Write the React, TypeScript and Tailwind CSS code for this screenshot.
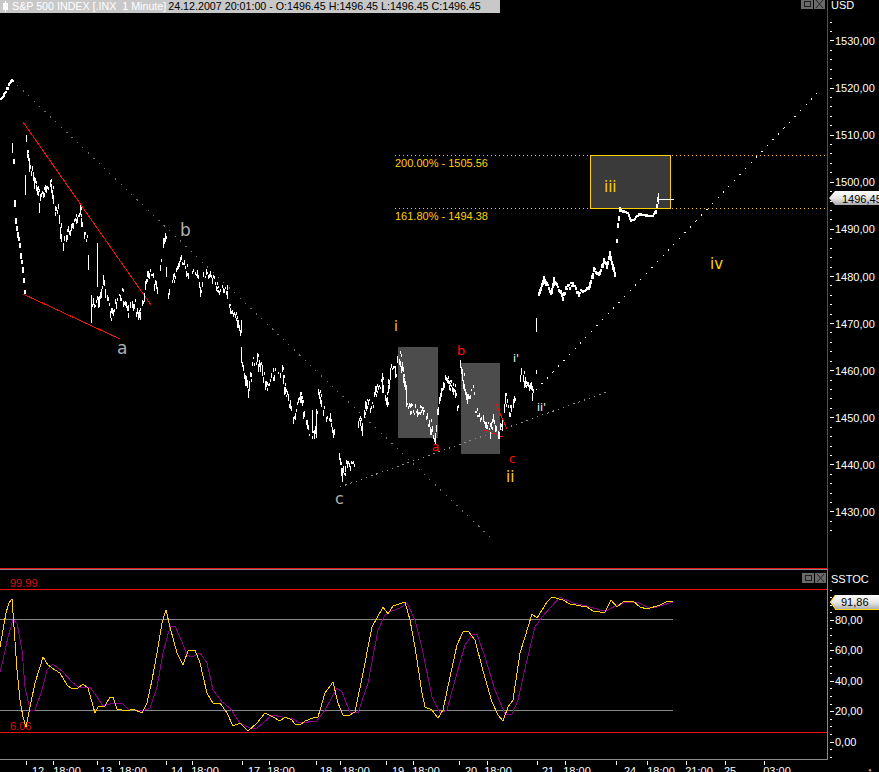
type Pt = [number, number];

// traced from the chart, in page pixels
const PRICE: { jitter: number; pts: Pt[] }[] = [
  { jitter: 1, pts: [[0, 98], [3, 94], [6, 88], [10, 80], [12, 79]] },
  { jitter: 2, pts: [[13, 160], [14, 200], [15, 218], [17, 232], [19, 242], [20, 253], [22, 268], [24, 290]] },
  {
    jitter: 5,
    pts: [[26, 135], [27, 150], [29, 163], [32, 170], [34, 178], [37, 185], [39, 200], [43, 190], [50, 180], [55, 207], [58, 208], [60, 227], [63, 240], [68, 230], [75, 218], [80, 210], [83, 230], [87, 240]],
  },
  {
    jitter: 5,
    pts: [[90, 297], [93, 303], [98, 300], [103, 277], [107, 293], [110, 313], [117, 297], [122, 293], [128, 310], [133, 300], [138, 313], [143, 297], [147, 270], [153, 277], [157, 287]],
  },
  { jitter: 4, pts: [[160, 262], [163, 240], [165, 233]] },
  {
    jitter: 4,
    pts: [[168, 290], [173, 277], [180, 257], [184, 263], [188, 273], [197, 273], [200, 290], [203, 273], [210, 273], [217, 287], [227, 287], [230, 307], [237, 317], [241, 333]],
  },
  {
    jitter: 5,
    pts: [[242, 363], [245, 377], [248, 388], [252, 363], [257, 357], [262, 370], [266, 383], [273, 373], [282, 367], [284, 387], [287, 393], [293, 413], [300, 397], [304, 412], [308, 430], [314, 432], [318, 390], [323, 410], [330, 417], [336, 437]],
  },
  { jitter: 5, pts: [[339, 450], [342, 473], [347, 463], [353, 460]] },
  {
    jitter: 5,
    pts: [[358, 417], [362, 427], [365, 403], [373, 403], [375, 390], [382, 380], [387, 397], [388, 383], [391, 367], [395, 370], [398, 350], [402, 367], [405, 383]],
  },
  {
    jitter: 5,
    pts: [[407, 407], [410, 407], [417, 410], [423, 410], [430, 423], [435, 437], [437, 413], [440, 390], [445, 377], [450, 383], [455, 390], [458, 407]],
  },
  {
    jitter: 5,
    pts: [[460, 365], [463, 377], [467, 397], [473, 388], [475, 410], [483, 417], [490, 427], [493, 413], [498, 430], [502, 420], [505, 397], [510, 410], [515, 393]],
  },
  { jitter: 5, pts: [[520, 370], [525, 380], [532, 390], [537, 370]] },
  {
    jitter: 2,
    pts: [[538, 293], [543, 275], [545, 282], [550, 290], [553, 278], [562, 295], [565, 287], [572, 283], [578, 292], [588, 287], [593, 269], [598, 273], [603, 260], [606, 263], [609, 252], [612, 263], [614, 270]],
  },
  { jitter: 1, pts: [[616, 238], [617, 223], [619, 208]] },
  { jitter: 0.6, pts: [[619, 208], [622, 210], [627, 212], [630, 219], [633, 219], [638, 213], [647, 215], [652, 215], [655, 210], [657, 197]] },
];

const SPIKES: [number, number, number][] = [
  [12, 143, 153], [25, 175, 195], [88, 255, 270], [91, 295, 323], [97, 243, 287], [166, 267, 277],
  [241, 320, 333], [241, 347, 363], [312, 410, 433], [316, 412, 438], [382, 373, 393], [406, 385, 407], [536, 318, 332], [658, 193, 204],
];

const YELLOW: Pt[] = [
  [0, 647], [3, 630], [6, 613], [9, 603], [12, 599], [14, 627], [17, 670], [20, 700], [23, 717], [26, 727], [30, 707], [35, 683], [40, 667], [43, 657], [48, 665], [55, 670], [60, 673], [67, 685], [72, 689], [78, 688], [83, 684], [88, 688], [95, 713], [98, 707], [105, 706], [110, 697], [113, 697], [117, 709], [127, 711], [133, 709], [142, 713], [147, 703], [152, 680], [157, 653], [162, 623], [166, 610], [170, 627], [177, 653], [183, 665], [188, 651], [195, 650], [200, 663], [207, 693], [213, 703], [220, 703], [227, 713], [233, 726], [240, 723], [248, 731], [257, 723], [265, 713], [273, 717], [280, 721], [285, 717], [292, 720], [295, 724], [300, 725],
  [305, 721], [313, 718], [318, 717], [325, 693], [333, 682], [338, 703], [343, 715], [348, 716], [355, 712], [363, 673], [372, 627], [377, 618], [383, 607], [388, 614], [393, 606], [405, 602], [410, 620], [415, 647], [422, 693], [425, 707], [432, 710], [438, 718], [443, 710], [450, 677], [457, 645], [463, 632], [468, 631], [475, 640], [482, 667], [492, 702], [498, 715], [503, 721], [508, 707], [513, 700], [520, 653], [525, 637], [532, 614], [537, 618], [547, 602], [552, 597], [563, 600], [570, 604], [587, 607], [593, 611], [600, 612],
  [605, 612], [611, 600], [617, 607], [623, 602], [633, 601], [640, 607], [647, 609], [660, 605], [668, 601], [673, 601],
];

const PURPLE: Pt[] = [
  [0, 672], [3, 660], [8, 637], [13, 620], [17, 623], [22, 650], [25, 687], [30, 710], [35, 710], [42, 690], [47, 670], [53, 664], [63, 672], [73, 683], [80, 688], [90, 687], [97, 697], [103, 706], [113, 703], [122, 703], [128, 709], [143, 711], [150, 708], [157, 687], [163, 653], [170, 627], [175, 626], [180, 637], [187, 655], [192, 657], [200, 653], [207, 663], [213, 690], [222, 702], [230, 708], [240, 723], [250, 728], [257, 728], [263, 723], [272, 715], [283, 717], [293, 719], [300, 723],
  [317, 721], [325, 710], [337, 688], [342, 692], [350, 712], [358, 713], [368, 683], [378, 630], [385, 615], [392, 611], [400, 608], [407, 603], [415, 620], [422, 648], [432, 697], [440, 713], [447, 710], [457, 673], [465, 645], [472, 635], [477, 634], [485, 657], [495, 690], [505, 714], [512, 714], [518, 700], [527, 660], [535, 627], [542, 617], [560, 597], [573, 603], [587, 606], [600, 610],
  [608, 610], [617, 605], [627, 602], [637, 602], [647, 607], [657, 607], [673, 602],
];

const TIME_LABELS: [number, string][] = [
  [38, '12'], [67, '18:00'], [106, '13'], [133, '18:00'], [177, '14'], [205, '18:00'], [254, '17'], [281, '18:00'],
  [326, '18'], [356, '18:00'], [398, '19'], [426, '18:00'], [471, '20'], [498, '18:00'], [548, '21'], [577, '18:00'],
  [630, '24'], [661, '18:00'], [699, '21:00'], [730, '25'], [777, '03:00'],
];
const TIME_TICKS = [26, 53, 97, 119, 166, 192, 242, 269, 316, 340, 386, 413, 459, 487, 537, 565, 616, 647, 686, 725, 764];

const PRICE_LABELS = [1530, 1520, 1510, 1500, 1490, 1480, 1470, 1460, 1450, 1440, 1430];
const STOCH_LABELS = ['80,00', '60,00', '40,00', '20,00', '0,00'];

const toPoints = (pts: Pt[]) => pts.map(([x, y]) => `${x},${y}`).join(' ');

// little LCG so the specks come out the same on every render
function makeSpecks() {
  let seed = 12345;
  const rand = () => {
    seed = (seed * 1103515245 + 12345) & 0x7fffffff;
    return seed / 0x7fffffff;
  };
  const specks: { x: number; y: number; w: number; h: number }[] = [];
  PRICE.forEach(({ jitter, pts }) => {
    for (let i = 0; i < pts.length - 1; i++) {
      const [x0, y0] = pts[i];
      const [x1, y1] = pts[i + 1];
      for (let x = x0; x <= x1; x++) {
        const t = x1 === x0 ? 0 : (x - x0) / (x1 - x0);
        const base = y0 + (y1 - y0) * t;
        const steep = Math.abs(y1 - y0) / Math.max(1, x1 - x0);
        if (jitter > 2 && rand() < 0.2) continue;
        specks.push({
          x,
          y: Math.round(base + (rand() - 0.5) * jitter * 2),
          w: jitter > 2 ? 1 : 2,
          h: Math.max(2, Math.round(rand() * jitter * 1.1 + Math.min(steep, 4))),
        });
        // stray second tick next to the first, makes the clusters look blocky
        if (jitter > 2 && rand() < 0.45) {
          specks.push({ x: x + 1, y: Math.round(base + (rand() - 0.5) * jitter * 2), w: 1, h: 3 });
        }
      }
    }
  });
  return specks;
}

function WindowButtons() {
  return (
    <div className="flex gap-[1px]">
      <svg width="12" height="10" viewBox="0 0 12 10" shapeRendering="crispEdges">
        <rect width="12" height="10" fill="#6a6a6a" />
        <rect x="3" y="2.5" width="6" height="5" fill="none" stroke="#1c1c1c" />
      </svg>
      <svg width="11" height="10" viewBox="0 0 11 10">
        <rect width="11" height="10" fill="#6a6a6a" />
        <path d="M2 1 L9 9 M9 1 L2 9" stroke="#222" strokeWidth="1" />
      </svg>
    </div>
  );
}

function PriceChart() {
  const specks = makeSpecks();
  return (
    <svg width="827" height="556" viewBox="0 13 827 556" className="block">
      <rect x="398" y="347" width="40" height="91" fill="#4c4c4c" />
      <rect x="461" y="363" width="39" height="91" fill="#4c4c4c" />
      <rect x="590.5" y="155.5" width="80" height="52.5" fill="#3a3a3a" stroke="#ffd200" shapeRendering="crispEdges" />

      <g fill="none" shapeRendering="crispEdges">
        <line x1="12" y1="80" x2="494" y2="541" stroke="#707070" strokeDasharray="1.5 6" />
        <line x1="340" y1="487" x2="607" y2="392" stroke="#909090" strokeDasharray="1.5 4" />
        <line x1="536" y1="390" x2="821" y2="89" stroke="#ffffff" strokeDasharray="1.5 6.5" />
        <g stroke="#ffd200" strokeDasharray="1 3">
          <line x1="395" y1="155.5" x2="590" y2="155.5" />
          <line x1="672" y1="155.5" x2="825" y2="155.5" />
          <line x1="395" y1="208.5" x2="590" y2="208.5" />
          <line x1="672" y1="208.5" x2="825" y2="208.5" />
        </g>
      </g>

      <g stroke="#ee1111" shapeRendering="crispEdges">
        <line x1="23" y1="122" x2="151" y2="305" />
        <line x1="23" y1="294" x2="120" y2="339" />
        <line x1="496" y1="404" x2="507" y2="429" />
        <line x1="484" y1="430" x2="503" y2="437" />
        <line x1="0" y1="568.5" x2="827" y2="568.5" />
      </g>

      <g fill="#ffffff" shapeRendering="crispEdges">
        {specks.map((s, i) => (
          <rect key={i} x={s.x} y={s.y} width={s.w} height={s.h} />
        ))}
        {SPIKES.map(([x, y0, y1]) => (
          <rect key={`${x}-${y0}`} x={x} y={y0} width="1" height={y1 - y0} />
        ))}
        <rect x="659" y="199" width="15" height="1" />
      </g>

      <g className="font-['DejaVu_Sans',sans-serif]">
        <text x="117" y="354" className="fill-[#b0b0b0] text-[17px]">a</text>
        <text x="180" y="236" className="fill-[#b0b0b0] text-[17px]">b</text>
        <text x="335" y="504" className="fill-[#b0b0b0] text-[16px]">c</text>
        <text x="457" y="355" className="fill-[#ff1111] text-[13px]">b</text>
        <text x="432" y="451" className="fill-[#ff1111] text-[12px]">a</text>
        <text x="509" y="463" className="fill-[#ff1111] text-[12px]">c</text>
        <text x="394" y="331" className="fill-[#ffd200] text-[14px]">i</text>
        <text x="506" y="482" className="fill-[#ffd200] text-[15px]">ii</text>
        <text x="604" y="192" className="fill-[#ffd200] text-[15px]">iii</text>
        <text x="710" y="269" className="fill-[#ffd200] text-[15px]">iv</text>
        <text x="513" y="362" className="fill-white text-[11px]">i'</text>
        <text x="537" y="411" className="fill-white text-[11px]">ii'</text>
      </g>
      <text x="395" y="167" className="fill-[#ffd200] text-[11px]">200.00% - 1505.56</text>
      <text x="395" y="220" className="fill-[#ffd200] text-[11px]">161.80% - 1494.38</text>
    </svg>
  );
}

function PriceAxis() {
  return (
    <svg width="52" height="569" viewBox="827 0 52 569" className="block">
      <defs>
        <linearGradient id="tag" x1="0" y1="0" x2="0" y2="1">
          <stop offset="0" stopColor="#ffffff" />
          <stop offset="0.55" stopColor="#e4e4e4" />
          <stop offset="1" stopColor="#a8a8a8" />
        </linearGradient>
      </defs>
      <rect x="827" y="0" width="1" height="569" fill="#dd1111" />
      <text x="831" y="9" className="fill-white text-[11px]">USD</text>
      <g fill="#ffffff" shapeRendering="crispEdges">
        {Array.from({ length: 55 }, (_, i) => (
          <rect key={i} x="830" y={Math.round(21.6 + i * 9.42)} width={i % 5 === 2 ? 4 : 2} height="1" />
        ))}
      </g>
      {PRICE_LABELS.map((p, i) => (
        <text key={p} x="835" y={45 + i * 47.1} className="fill-white text-[11px]">{p},00</text>
      ))}
      <polygon points="829,198 835,191 879,191 879,205 835,205" fill="url(#tag)" />
      <text x="842" y="203" className="fill-black text-[11px]">1496,45</text>
    </svg>
  );
}

function StochChart() {
  return (
    <svg width="827" height="190" viewBox="0 569 827 190" className="block">
      <g shapeRendering="crispEdges">
        <line x1="0" y1="569.5" x2="827" y2="569.5" stroke="#888888" />
        <line x1="0" y1="589.5" x2="827" y2="589.5" stroke="#ee1111" />
        <line x1="0" y1="619.5" x2="673" y2="619.5" stroke="#888888" />
        <line x1="0" y1="710.5" x2="673" y2="710.5" stroke="#888888" />
        <line x1="0" y1="732.5" x2="827" y2="732.5" stroke="#ee1111" />
      </g>
      <text x="10" y="587" className="fill-[#dd1111] text-[11px]">99.99</text>
      <text x="10" y="730" className="fill-[#dd1111] text-[11px]">6.06</text>
      <polyline points={toPoints(PURPLE)} fill="none" stroke="#880088" shapeRendering="crispEdges" />
      <polyline points={toPoints(YELLOW)} fill="none" stroke="#ffd200" shapeRendering="crispEdges" />
    </svg>
  );
}

function StochAxis() {
  return (
    <svg width="52" height="190" viewBox="827 569 52 190" className="block">
      <defs>
        <linearGradient id="tag2" x1="0" y1="0" x2="0" y2="1">
          <stop offset="0" stopColor="#ffffff" />
          <stop offset="0.55" stopColor="#e4e4e4" />
          <stop offset="1" stopColor="#b0b0b0" />
        </linearGradient>
      </defs>
      <rect x="827" y="569" width="1" height="190" fill="#888888" />
      <text x="831" y="583" className="fill-white text-[11px]">SSTOC</text>
      <g fill="#ffffff" shapeRendering="crispEdges">
        {Array.from({ length: 23 }, (_, i) => (
          <rect key={i} x="830" y={Math.round(589.5 + i * 7.6)} width={i > 0 && i % 4 === 0 ? 4 : 2} height="1" />
        ))}
      </g>
      {STOCH_LABELS.map((l, i) => (
        <text key={l} x="835" y={624 + i * 30.4} className="fill-white text-[11px]">{l}</text>
      ))}
      <polygon points="830,602 835,595 879,595 879,609 835,609" fill="url(#tag2)" />
      <line x1="835" y1="609" x2="879" y2="609" stroke="#ffd200" shapeRendering="crispEdges" />
      <polygon points="830,602 835,609 836,609 831,602 836,595 835,595" fill="#ffd200" />
      <text x="841" y="606" className="fill-black text-[11px]">91,86</text>
    </svg>
  );
}

function TimeAxis() {
  return (
    <svg width="879" height="13" viewBox="0 759 879 13" className="block">
      <rect x="0" y="759" width="828" height="1" fill="#888888" />
      <g fill="#ffffff" shapeRendering="crispEdges">
        {TIME_TICKS.map((x) => (
          <rect key={x} x={x} y="761" width="1" height="4" />
        ))}
      </g>
      {TIME_LABELS.map(([x, label]) => (
        <text key={x} x={x} y="775" textAnchor="middle" className="fill-white text-[11px]">{label}</text>
      ))}
      <text x="870" y="775" textAnchor="middle" className="fill-white text-[11px]">↑</text>
    </svg>
  );
}

export default function App() {
  return (
    <div className="w-[879px] h-[772px] overflow-hidden bg-black font-['Liberation_Sans',sans-serif] flex flex-col">
      <div className="flex h-[569px]">
        <div className="w-[827px] flex flex-col">
          <div className="h-[13px] flex items-start justify-between pr-[2px]">
            <div className="w-[500px] h-[13px] bg-[#c8c8c8] flex items-center gap-[2px] pl-[2px] text-[10.7px] leading-[13px] whitespace-nowrap overflow-hidden">
              <svg width="7" height="11" viewBox="0 0 7 11" className="shrink-0" shapeRendering="crispEdges">
                <rect x="3" y="0" width="1" height="11" fill="#ffffff" />
                <rect x="1" y="2" width="5" height="7" fill="#ffffff" />
              </svg>
              <span className="text-white ml-[1px]">S&amp;P 500 INDEX [.INX&nbsp; 1 Minute]</span>
              <span className="text-black">24.12.2007 20:01:00 - O:1496.45 H:1496.45 L:1496.45 C:1496.45</span>
            </div>
            <div className="-mt-[1px]">
              <WindowButtons />
            </div>
          </div>
          <PriceChart />
        </div>
        <PriceAxis />
      </div>
      <div className="flex h-[190px]">
        <div className="relative w-[827px]">
          <StochChart />
          <div className="absolute right-[1px] top-[4px]">
            <WindowButtons />
          </div>
        </div>
        <StochAxis />
      </div>
      <TimeAxis />
    </div>
  );
}
